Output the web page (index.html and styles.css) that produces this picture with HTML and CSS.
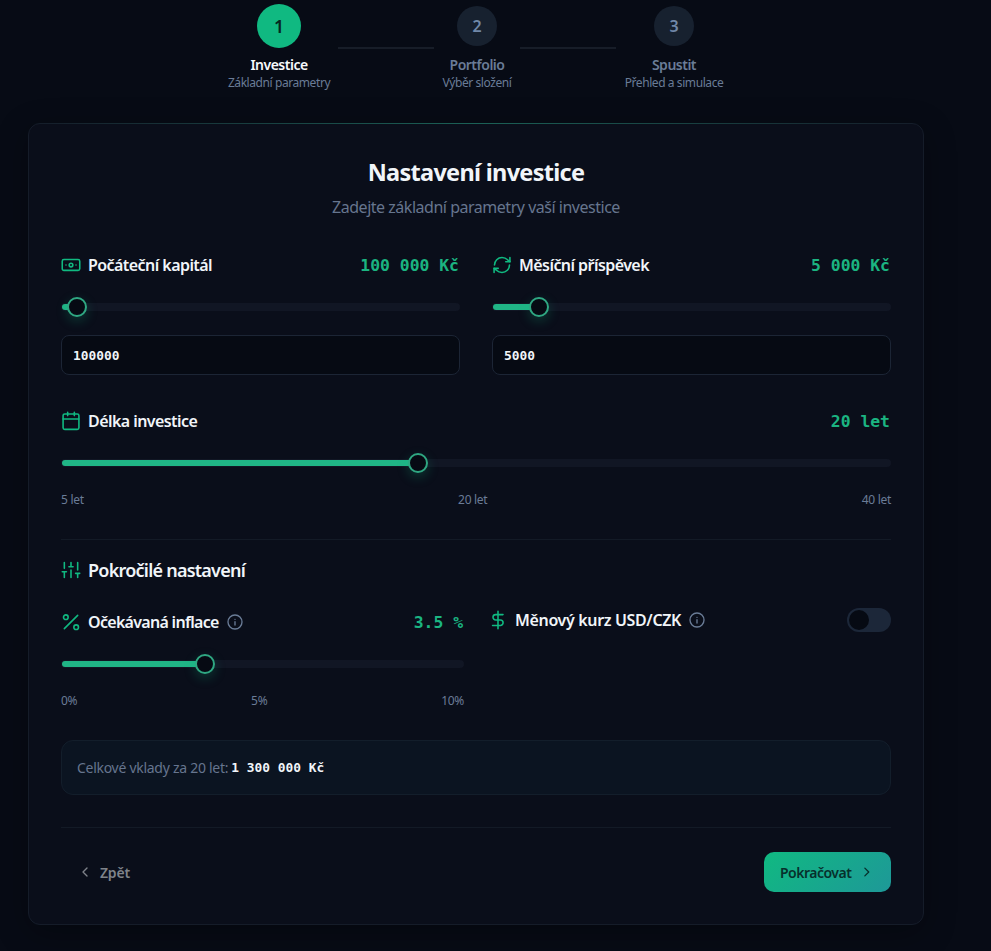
FILE: index.html
```
<!DOCTYPE html>
<html lang="cs">
<head>
    <meta charset="UTF-8">
    <meta name="viewport" content="width=device-width, initial-scale=1.0">
    <title>Nastavení investice</title>
    <link rel="stylesheet" href="styles.css">
</head>
<body>
    <main class="page">

        <!-- Steps -->
        <nav class="steps">
            <div class="step step-1 active">
                <div class="step-circle">1</div>
                <div class="step-name">Investice</div>
                <div class="step-desc">Základní parametry</div>
            </div>
            <div class="step-line"></div>
            <div class="step step-2">
                <div class="step-circle">2</div>
                <div class="step-name">Portfolio</div>
                <div class="step-desc">Výběr složení</div>
            </div>
            <div class="step-line"></div>
            <div class="step step-3">
                <div class="step-circle">3</div>
                <div class="step-name">Spustit</div>
                <div class="step-desc">Přehled a simulace</div>
            </div>
        </nav>

        <section class="card">
            <h1>Nastavení investice</h1>
            <p class="subtitle">Zadejte základní parametry vaší investice</p>

            <div class="grid">
                <div class="field">
                    <div class="field-head">
                        <svg class="icon" viewBox="0 0 24 24"><rect width="21" height="13" x="1.5" y="5.5" rx="2"/><circle cx="12" cy="12" r="2.2"/><path d="M6 12h.01M18 12h.01"/></svg>
                        <label for="capital">Počáteční kapitál</label>
                        <span class="value">100 000 Kč</span>
                    </div>
                    <div class="slider">
                        <div class="slider-fill" style="width: 3.9%"></div>
                        <div class="slider-thumb" style="left: 3.9%"></div>
                    </div>
                    <input type="text" id="capital" value="100000">
                </div>
                <div class="field">
                    <div class="field-head">
                        <svg class="icon" viewBox="0 0 24 24"><path d="M3 12a9 9 0 0 1 9-9 9.75 9.75 0 0 1 6.74 2.74L21.500 8"/><path d="M21.500 3v5h-5"/><path d="M21 12a9 9 0 0 1-9 9 9.75 9.75 0 0 1-6.74-2.74L2.500 16"/><path d="M7.500 16h-5v5"/></svg>
                        <label for="monthly">Měsíční příspěvek</label>
                        <span class="value">5 000 Kč</span>
                    </div>
                    <div class="slider">
                        <div class="slider-fill" style="width: 11.8%"></div>
                        <div class="slider-thumb" style="left: 11.8%"></div>
                    </div>
                    <input type="text" id="monthly" value="5000">
                </div>
            </div>

            <div class="field length">
                <div class="field-head">
                    <svg class="icon" viewBox="0 0 24 24"><path d="M8 1.5v4M16 1.5v4"/><rect width="19" height="18.5" x="2.5" y="3.5" rx="2"/><path d="M2.5 9.5h19"/></svg>
                    <label>Délka investice</label>
                    <span class="value">20 let</span>
                </div>
                <div class="slider">
                    <div class="slider-fill" style="width: 43%"></div>
                    <div class="slider-thumb" style="left: 43%"></div>
                </div>
                <div class="scale">
                    <span>5 let</span>
                    <span>20 let</span>
                    <span>40 let</span>
                </div>
            </div>

            <div class="advanced">
                <h2>
                    <svg class="icon" viewBox="0 0 24 24"><path d="M4 21v-7M4 10V3M12 21v-9M12 8V3M20 21v-5M20 12V3M1.5 14h5M9.5 8h5M17.5 16h5"/></svg>
                    <span>Pokročilé nastavení</span>
                </h2>
                <div class="grid grid-advanced">
                    <div class="field">
                        <div class="field-head">
                            <svg class="icon" viewBox="0 0 24 24"><path d="M20 4 4 20"/><circle cx="5.8" cy="6.2" r="2.8"/><circle cx="18.2" cy="18.2" r="2.8"/></svg>
                            <label class="label-inflation">Očekávaná inflace</label>
                            <svg class="info" viewBox="0 0 24 24"><circle cx="12" cy="12" r="10.5"/><path d="M12 16.5V11.5M12 8h.01"/></svg>
                            <span class="value">3.5 %</span>
                        </div>
                        <div class="slider">
                            <div class="slider-fill" style="width: 35.7%"></div>
                            <div class="slider-thumb" style="left: 35.7%"></div>
                        </div>
                        <div class="scale">
                            <span>0%</span>
                            <span>5%</span>
                            <span>10%</span>
                        </div>
                    </div>
                    <div class="field-head rate">
                        <svg class="icon" viewBox="0 0 24 24"><path d="M12 1.5v21M18 5.5H9.2a3.2 3.2 0 0 0 0 6.4h5.6a3.3 3.3 0 0 1 0 6.6H5.5"/></svg>
                        <label class="label-rate">Měnový kurz USD/CZK</label>
                        <svg class="info" viewBox="0 0 24 24"><circle cx="12" cy="12" r="10.5"/><path d="M12 16.5V11.5M12 8h.01"/></svg>
                        <div class="switch"><div class="switch-knob"></div></div>
                    </div>
                </div>
            </div>

            <div class="summary"><span class="summary-text">Celkové vklady za 20 let:</span><strong>1 300 000 Kč</strong></div>

            <div class="actions">
                <button type="button" class="btn btn-back">
                    <svg viewBox="0 0 24 24"><path d="m15 18-6-6 6-6"/></svg>
                    <span>Zpět</span>
                </button>
                <button type="button" class="btn btn-next">
                    <span>Pokračovat</span>
                    <svg viewBox="0 0 24 24"><path d="m9 18 6-6-6-6"/></svg>
                </button>
            </div>
        </section>
    </main>
</body>
</html>
```
FILE: styles.css
```
* {
    box-sizing: border-box;
}

body {
    margin: 0;
    height: 951px;
    overflow: hidden;
    background: #070b15;
    color: #f1f5f9;
    font-family: "Noto Sans", "Open Sans", sans-serif;
}

.page {
    width: 896px;
    margin-left: 28px;
}

/* Steps */
.steps {
    display: flex;
    gap: 8px;
    height: 123px;
    padding: 6px 0 0 200px;
}

.step {
    display: flex;
    flex-direction: column;
    align-items: center;
    white-space: nowrap;
    color: #6a7c97;
}

.step-1 {
    width: 102px;
}

.step-2 {
    width: 70px;
}

.step-3 {
    width: 100px;
}

.step-circle {
    width: 40px;
    height: 40px;
    border-radius: 50%;
    background: #17212f;
    color: #7188a8;
    font-size: 16px;
    font-weight: 600;
    line-height: 40px;
    text-align: center;
}

.step-name {
    margin-top: 9px;
    font-size: 14px;
    font-weight: 600;
    line-height: 19px;
    letter-spacing: -0.5px;
}

.step-desc {
    font-size: 12px;
    line-height: 17px;
    letter-spacing: -0.42px;
}

.step.active .step-circle {
    background: #10b981;
    color: #06281f;
    transform: scale(1.1);
}

.step.active .step-name {
    color: #f8fafc;
}

.step-line {
    width: 96px;
    height: 2px;
    margin-top: 41px;
    background: #171d28;
}

/* Card */
.card {
    position: relative;
    height: 802px;
    padding: 32px;
    border: 1px solid #151c29;
    border-radius: 12px;
    background: #0a0e1a;
    box-shadow: 0 8px 32px rgba(0, 0, 0, 0.3);
}

.card::before {
    content: "";
    position: absolute;
    top: -1px;
    left: 0;
    right: 0;
    height: 1px;
    background: linear-gradient(90deg, transparent, #1b6156, transparent);
}

h1 {
    margin: 0;
    font-size: 23.5px;
    line-height: 32px;
    letter-spacing: -0.7px;
    text-align: center;
}

.subtitle {
    margin: 7px 0 0;
    color: #66758e;
    font-size: 16px;
    line-height: 24px;
    letter-spacing: -0.48px;
    text-align: center;
}

.grid {
    display: grid;
    grid-template-columns: 1fr 1fr;
    gap: 32px;
    margin-top: 34px;
}

.field-head {
    display: flex;
    align-items: center;
    height: 24px;
    white-space: nowrap;
}

.field-head label {
    margin-left: 7px;
    font-size: 16px;
    font-weight: 600;
    letter-spacing: -0.56px;
}

.field-head .label-inflation {
    letter-spacing: -0.7px;
}

.field-head .label-rate {
    letter-spacing: -0.35px;
}

.icon {
    width: 20px;
    height: 20px;
    fill: none;
    stroke: #10b981;
    stroke-width: 1.9;
    stroke-linecap: round;
    stroke-linejoin: round;
}

.info {
    width: 16px;
    height: 16px;
    margin-left: 8px;
    fill: none;
    stroke: #6a7c97;
    stroke-width: 2;
    stroke-linecap: round;
}

.value {
    margin-left: auto;
    padding-right: 1px;
    color: #1bb481;
    font-family: "DejaVu Sans Mono", monospace;
    font-size: 16.4px;
    font-weight: 700;
}

.slider {
    position: relative;
    height: 8px;
    margin-top: 26px;
    padding: 1px;
    border-radius: 4px;
    background: #111624;
}

.slider-fill {
    height: 6px;
    border-radius: 3px;
    background: #20b586;
}

.slider-thumb {
    position: absolute;
    top: -6px;
    width: 20px;
    height: 20px;
    margin-left: -10px;
    border: 2px solid #2fa782;
    border-radius: 50%;
    background: #060a13;
    box-shadow: 0 4px 12px rgba(16, 185, 129, 0.25);
}

.field input {
    display: block;
    width: 100%;
    height: 40px;
    margin-top: 24px;
    padding: 0 11px;
    border: 1px solid #1c2535;
    border-radius: 8px;
    background: #060a13;
    color: #f1f5f9;
    font-family: "DejaVu Sans Mono", monospace;
    font-size: 12.9px;
    font-weight: 700;
}

.length {
    margin-top: 34px;
}

.scale {
    display: flex;
    justify-content: space-between;
    margin-top: 24px;
    color: #6a7c97;
    font-size: 12px;
    line-height: 18px;
    letter-spacing: -0.3px;
}

.advanced {
    margin-top: 30px;
    padding-top: 16px;
    border-top: 1px solid #131a26;
}

h2 {
    display: flex;
    align-items: center;
    gap: 7px;
    height: 28px;
    margin: 0;
    font-size: 18px;
    font-weight: 600;
    letter-spacing: -0.76px;
}

.grid-advanced {
    gap: 24px;
    margin-top: 26px;
}

.rate {
    margin-top: -2px;
}

.switch {
    width: 44px;
    height: 24px;
    margin-left: auto;
    padding: 2px;
    border-radius: 12px;
    background: #1c2739;
}

.switch-knob {
    width: 20px;
    height: 20px;
    border-radius: 50%;
    background: #060a13;
}

.summary {
    display: flex;
    align-items: center;
    height: 55px;
    margin-top: 30px;
    padding: 0 15px 1px;
    border: 1px solid #131e2b;
    border-radius: 12px;
    background: #0b1421;
    font-size: 14px;
    letter-spacing: -0.28px;
}

.summary-text {
    color: #66758e;
}

.summary strong {
    margin-left: 3px;
    font-family: "DejaVu Sans Mono", monospace;
    font-size: 12.9px;
    letter-spacing: 0;
}

.actions {
    display: flex;
    justify-content: space-between;
    margin-top: 32px;
    padding-top: 24px;
    border-top: 1px solid #131a26;
}

.btn {
    display: flex;
    align-items: center;
    gap: 8px;
    height: 40px;
    padding: 0 16px;
    border: none;
    border-radius: 10px;
    font-family: inherit;
    font-size: 14px;
    font-weight: 600;
}

.btn svg {
    width: 16px;
    height: 16px;
    fill: none;
    stroke: currentColor;
    stroke-width: 2;
    stroke-linecap: round;
    stroke-linejoin: round;
}

.btn-back {
    gap: 7px;
    background: transparent;
    color: #7f838a;
    letter-spacing: -0.2px;
}

.btn-next {
    width: 127px;
    background: linear-gradient(135deg, #10b981, #1e9898);
    color: #07302c;
    letter-spacing: -0.5px;
}
```
